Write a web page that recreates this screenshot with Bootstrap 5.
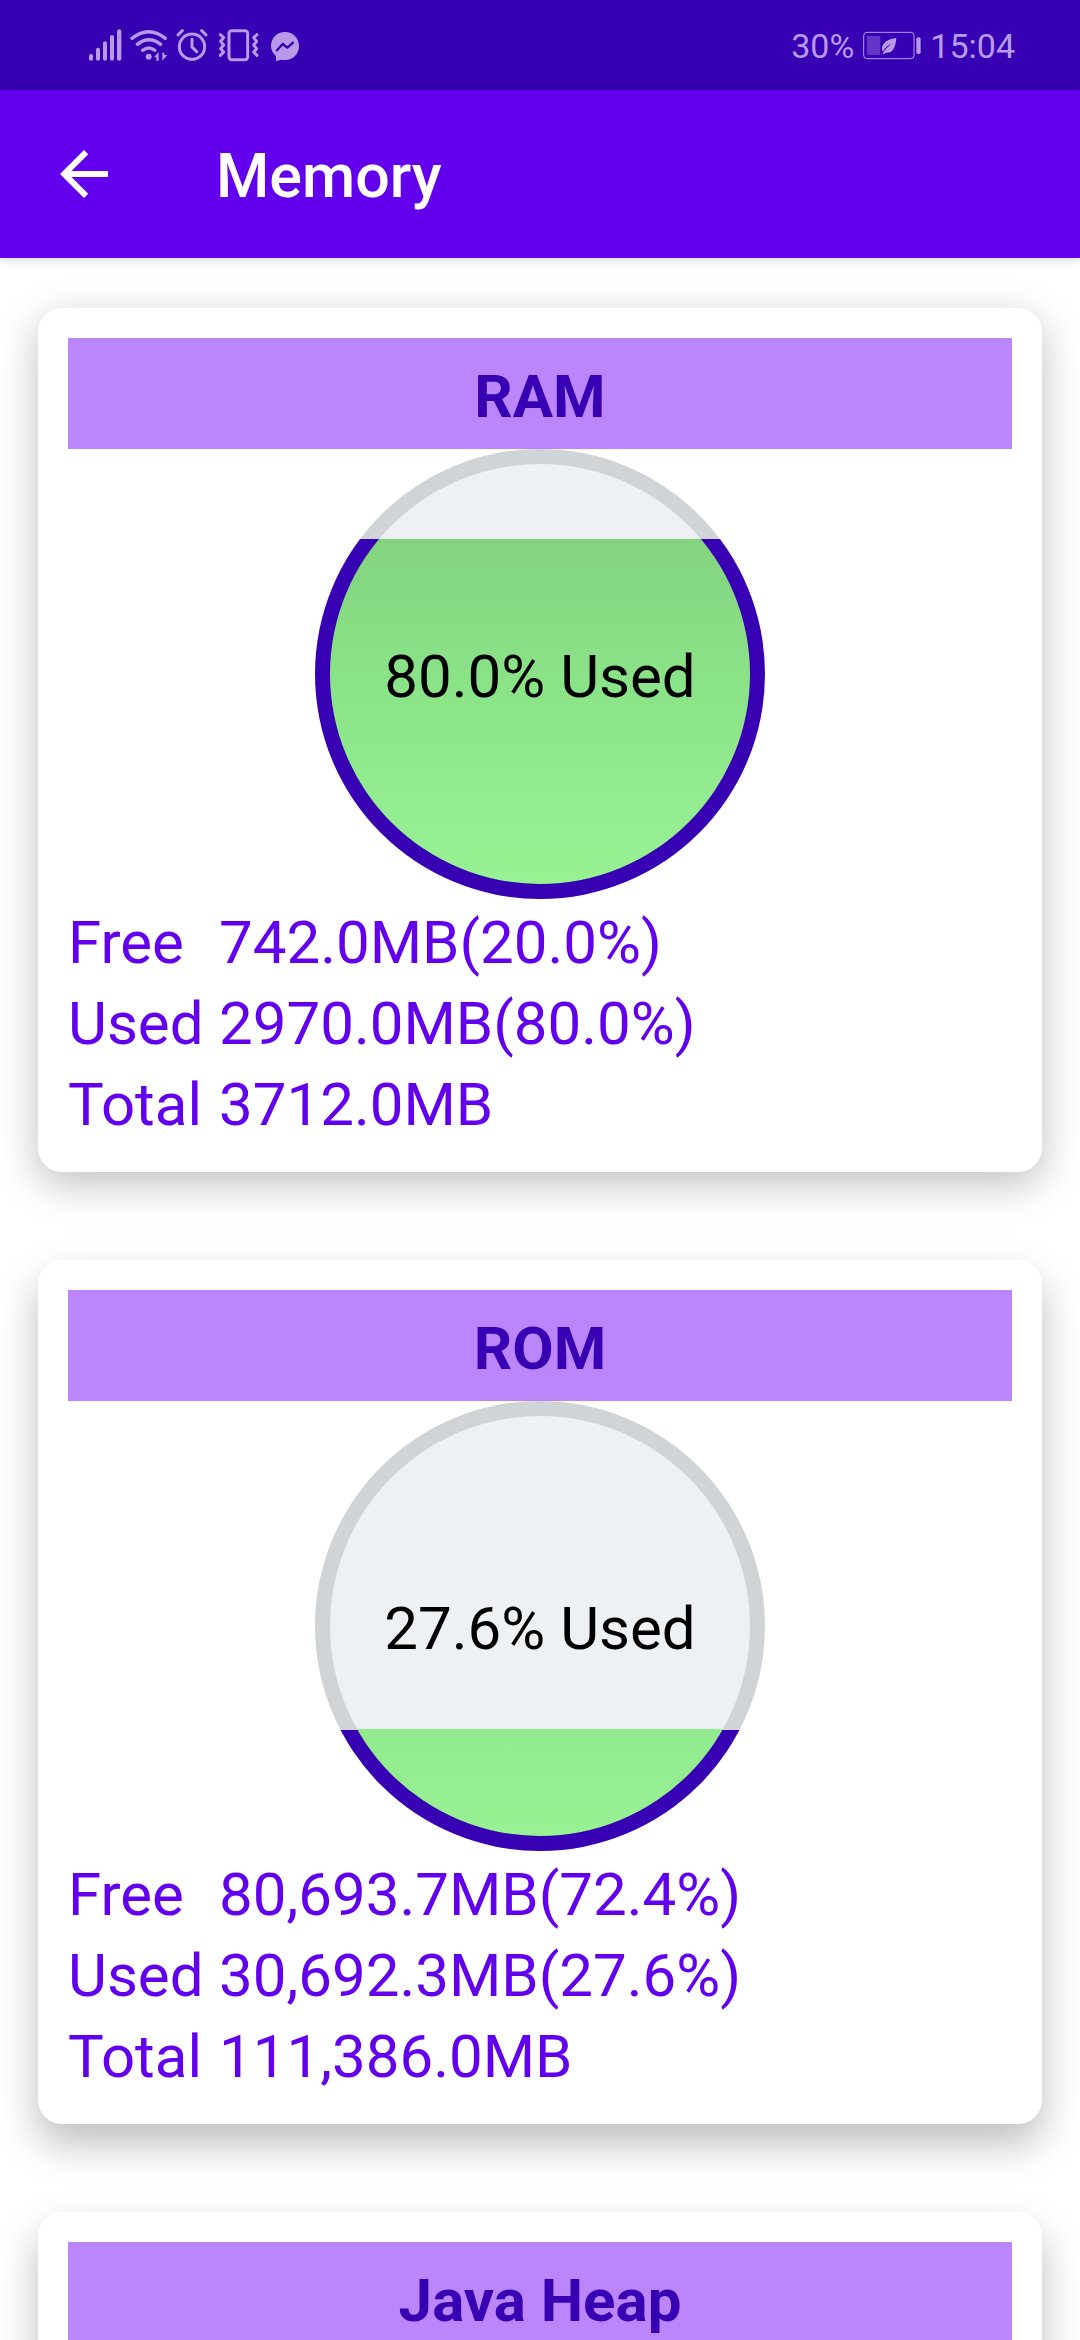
<!DOCTYPE html>
<html lang="en">
<head>
<meta charset="utf-8">
<meta name="viewport" content="width=device-width, initial-scale=1">
<title>Memory</title>
<link href="https://cdn.jsdelivr.net/npm/bootstrap@5.3.0/dist/css/bootstrap.min.css" rel="stylesheet">
<style>
  :root { --deep: #3700b3; --violet: #6200ee; --lilac: #bb86fc; --status: #b79bea; }
  body { font-family: Roboto, "Noto Sans", sans-serif; font-size: 60px; line-height: 81px; color: #000; background: #fff; }
  .status-bar { height: 90px; padding: 0 65px 0 88px; background: var(--deep); color: var(--status); font-size: 34px; line-height: 40px; }
  .status-icons { gap: 8px; }
  .status-info { gap: 9px; padding-top: 2px; }
  .app-bar { height: 168px; padding: 0 48px; gap: 96px; background: var(--violet); color: #fff; z-index: 2; box-shadow: 0 2px 10px rgba(0, 0, 0, .16); }
  .app-title { font-size: 61px; line-height: 81px; font-weight: 500; padding-top: 4px; }
  .back-btn { line-height: 0; color: #fff; }
  .screen { padding: 50px 38px; gap: 88px; }
  .screen::-webkit-scrollbar { display: none; }
  .mem-card { border-radius: 24px; padding: 30px 30px 27px; box-shadow: 0 12px 40px rgba(0, 0, 0, .25); }
  .mem-card + .mem-card { box-shadow: 0 20px 40px rgba(0, 0, 0, .26); }
  .mem-title { background: var(--lilac); color: var(--deep); font-size: 60px; line-height: 81px; font-weight: 700; padding: 18px 0 12px; }
  .gauge { --size: 450px; --rim: 15px; width: var(--size); height: var(--size); padding: var(--rim);
    background: linear-gradient(to top, var(--deep) var(--level), #d0d4d7 var(--level)); }
  .gauge-face { --water: calc(var(--level-num) * var(--size) - var(--rim)); padding-top: 4px;
    background: linear-gradient(to top, transparent var(--water), #edf1f4 var(--water)),
                linear-gradient(to bottom, #82d37f 17%, #8be388 52%, #98f294 100%); }
  .gauge-ram { --level: 80%; --level-num: .8; }
  .gauge-rom { --level: 27%; --level-num: .27; }
  .mem-stats { color: var(--violet); margin-top: 3px; }
  .mem-stats th { width: 151px; font-weight: 400; }
  .mem-stats th, .mem-stats td { padding: 0; }
</style>
</head>
<body class="vh-100 overflow-hidden d-flex flex-column">

<div class="status-bar flex-shrink-0 d-flex align-items-center justify-content-between">
  <div class="status-icons d-flex align-items-center">
    <svg width="34" height="34" viewBox="54 54 102 102" fill="currentColor" aria-hidden="true">
      <rect x="57" y="132" width="12" height="20" rx="6"/><rect x="78" y="113" width="12" height="39" rx="6"/><rect x="99" y="94" width="12" height="58" rx="6"/><rect x="120" y="75" width="12" height="77" rx="6"/><rect x="141" y="58" width="13" height="94" rx="6"/>
    </svg>
    <svg width="38" height="34" viewBox="180 54 114 102" fill="none" stroke="currentColor" stroke-width="10" stroke-linecap="round" aria-hidden="true">
      <path d="M186 85Q236 45 286 85M202 103Q237 75 272 103M218 121Q237 107 254 121"/>
      <circle cx="236" cy="140" r="9" fill="currentColor" stroke="none"/>
      <path d="M252 142L266 126V152H259V142ZM277 128H283V135H292L277 152Z" fill="currentColor" stroke="none"/>
    </svg>
    <svg width="34" height="34" viewBox="318 54 102 102" fill="none" stroke="currentColor" stroke-width="9" stroke-linecap="round" stroke-linejoin="round" aria-hidden="true">
      <circle cx="366" cy="110" r="38"/><path d="M324 75L337 62M395 62L408 75M366 88V111L380 125"/>
    </svg>
    <svg width="44" height="34" viewBox="444 54 132 102" fill="none" stroke="currentColor" stroke-width="9" stroke-linejoin="round" stroke-linecap="round" aria-hidden="true">
      <rect x="477" y="62" width="56" height="87" rx="8"/><path d="M451 74L461 83L452 94L461 105L452 116L461 126L451 136M561 74L551 83L560 94L551 105L560 116L551 126L561 136"/>
    </svg>
    <svg width="30" height="34" viewBox="600 54 90 102" aria-hidden="true">
      <path d="M645 66C621 66 603 84 603 108C603 121 609 131 618 138V153L635 149C638 150 642 150 645 150C669 150 687 132 687 108C687 84 669 66 645 66Z" fill="currentColor"/>
      <path d="M621 121L638 102L652 113L669 98" fill="none" stroke="#3700b3" stroke-width="7" stroke-linejoin="round" stroke-linecap="round"/>
    </svg>
  </div>
  <div class="status-info d-flex align-items-center">
    <span>30%</span>
    <svg width="58" height="30" viewBox="276 63 174 90" fill="currentColor" aria-hidden="true">
      <rect x="278" y="67" width="151" height="79" rx="10" fill="none" stroke="currentColor" stroke-width="3"/>
      <rect x="288" y="78" width="40" height="57" opacity=".35"/>
      <path d="M376 84C354 86 333 97 333 116C333 120 334 122 336 124C342 112 351 106 362 101C351 110 341 118 334 131L339 132L343 128C362 132 374 116 376 84Z"/>
      <rect x="436" y="82" width="13" height="50" rx="5"/>
    </svg>
    <span>15:04</span>
  </div>
</div>

<header class="app-bar position-relative flex-shrink-0 d-flex align-items-center">
  <button type="button" class="back-btn border-0 bg-transparent p-0" aria-label="Back">
    <svg width="72" height="72" viewBox="0 0 24 24" fill="currentColor" aria-hidden="true"><path d="M20 11H7.83l5.59-5.59L12 4l-8 8 8 8 1.41-1.41L7.83 13H20v-2z"/></svg>
  </button>
  <h1 class="app-title mb-0">Memory</h1>
</header>

<main class="screen flex-grow-1 overflow-auto d-flex flex-column">
  <section class="mem-card bg-white flex-shrink-0">
    <h2 class="mem-title text-center mb-0">RAM</h2>
    <div class="gauge gauge-ram rounded-circle mx-auto">
      <div class="gauge-face rounded-circle w-100 h-100 d-flex align-items-center justify-content-center">80.0% Used</div>
    </div>
    <table class="mem-stats">
      <tr><th scope="row">Free</th><td>742.0MB(20.0%)</td></tr>
      <tr><th scope="row">Used</th><td>2970.0MB(80.0%)</td></tr>
      <tr><th scope="row">Total</th><td>3712.0MB</td></tr>
    </table>
  </section>

  <section class="mem-card bg-white flex-shrink-0">
    <h2 class="mem-title text-center mb-0">ROM</h2>
    <div class="gauge gauge-rom rounded-circle mx-auto">
      <div class="gauge-face rounded-circle w-100 h-100 d-flex align-items-center justify-content-center">27.6% Used</div>
    </div>
    <table class="mem-stats">
      <tr><th scope="row">Free</th><td>80,693.7MB(72.4%)</td></tr>
      <tr><th scope="row">Used</th><td>30,692.3MB(27.6%)</td></tr>
      <tr><th scope="row">Total</th><td>111,386.0MB</td></tr>
    </table>
  </section>

  <section class="mem-card bg-white flex-shrink-0">
    <h2 class="mem-title text-center mb-0">Java Heap</h2>
  </section>
</main>

<script src="https://cdn.jsdelivr.net/npm/bootstrap@5.3.0/dist/js/bootstrap.bundle.min.js"></script>
</body>
</html>
